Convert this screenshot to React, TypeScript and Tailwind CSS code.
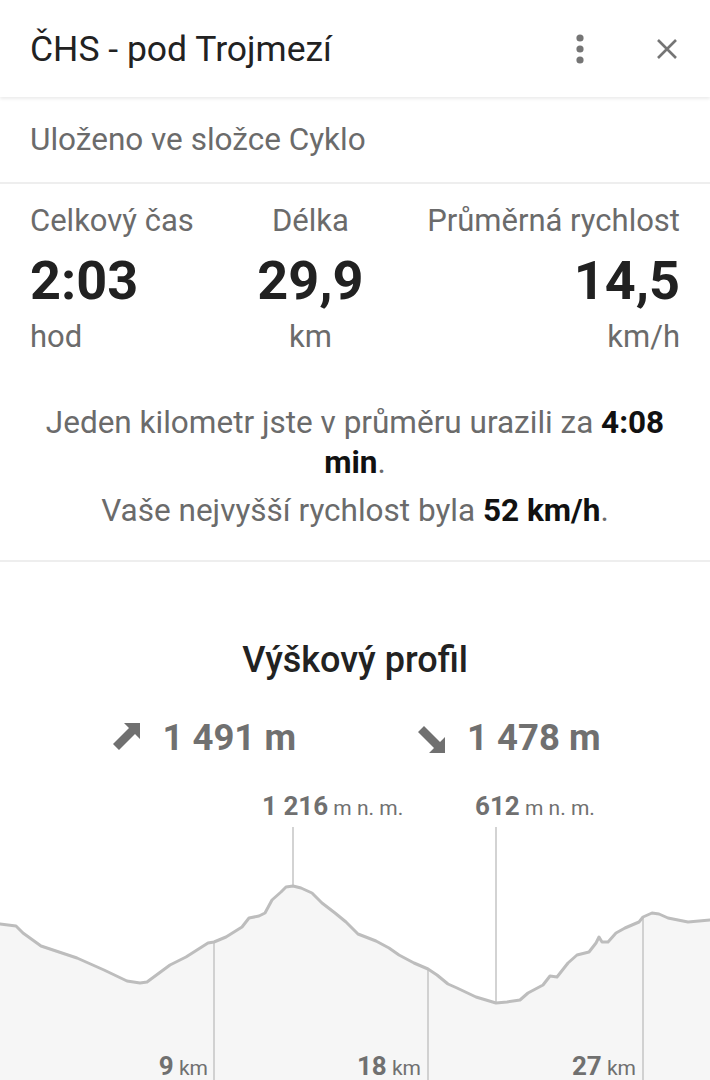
import React from "react";

const pts: [number, number][] = [
  [0, 924], [16, 926], [23, 933], [41, 946], [77, 958], [104, 970], [127, 981], [140, 983], [147, 982],
  [170, 965], [186, 957], [208, 943], [214, 942], [226, 937], [242, 927], [249, 918], [259, 916], [265, 913],
  [272, 900], [281, 892], [286, 887], [293, 886], [301, 888], [312, 893], [322, 903], [335, 913], [346, 922],
  [358, 934], [376, 941], [389, 948], [399, 955], [414, 963], [428, 969], [437, 975], [448, 984], [457, 988],
  [476, 997], [496, 1003], [507, 1002], [520, 1000], [528, 993], [543, 985], [550, 976], [557, 977], [568, 963],
  [577, 955], [589, 952], [596, 943], [599, 937], [602, 942], [608, 942], [616, 933], [625, 928], [639, 922],
  [643, 917], [652, 913], [659, 914], [668, 918], [688, 922], [710, 920],
];

const linePath = "M" + pts.map(([x, y]) => `${x},${y}`).join(" L");
const areaPath = linePath + " L712,1090 L-2,1090 Z";

function UpArrow() {
  return (
    <svg width="32" height="32" viewBox="0 0 32 32">
      <polygon points="31,1 31,17 26,12 10,28 4,22 20,6 15,1" fill="#707070" />
    </svg>
  );
}

function DownArrow() {
  return (
    <svg width="32" height="32" viewBox="0 0 32 32">
      <g transform="translate(32,0) scale(-1,1)">
        <polygon points="1,31 1,15 6,20 22,4 28,10 12,26 17,31" fill="#707070" />
      </g>
    </svg>
  );
}

export default function App() {
  return (
    <div className="w-[710px] h-[1080px] overflow-hidden bg-white font-['Roboto','Noto_Sans',sans-serif]">
      {/* Header */}
      <div className="relative z-10 h-[97px] flex items-center justify-between pl-[30px] pr-[31px] bg-white shadow-[0_2px_3px_rgba(0,0,0,0.08)]">
        <div className="text-[35.5px] leading-[40px] text-[#222222]">ČHS - pod Trojmezí</div>
        <div className="flex items-center gap-[63px]">
          <svg width="24" height="34" viewBox="0 0 24 34">
            <circle cx="12" cy="6" r="3.6" fill="#757575" />
            <circle cx="12" cy="17" r="3.6" fill="#757575" />
            <circle cx="12" cy="28" r="3.6" fill="#757575" />
          </svg>
          <svg width="24" height="24" viewBox="0 0 24 24">
            <path d="M3 3 L21 21 M21 3 L3 21" stroke="#757575" strokeWidth="2.6" strokeLinecap="butt" />
          </svg>
        </div>
      </div>

      {/* Folder */}
      <div className="h-[85px] flex items-center px-[30px] text-[31.5px] leading-[36px] text-[#6b6b6b]">
        Uloženo ve složce Cyklo
      </div>
      <div className="h-[2px] bg-[#eeeeee]" />

      {/* Stats */}
      <div className="pt-[20px] px-[30px] flex justify-between">
        <div className="flex flex-col items-start">
          <div className="text-[31px] leading-[34px] text-[#6b6b6b]">Celkový čas</div>
          <div className="mt-[15px] text-[54px] leading-[56px] font-bold text-[#212121]">2:03</div>
          <div className="mt-[11px] text-[31px] leading-[34px] text-[#6b6b6b]">hod</div>
        </div>
        <div className="flex flex-col items-center">
          <div className="text-[31px] leading-[34px] text-[#6b6b6b]">Délka</div>
          <div className="mt-[15px] text-[54px] leading-[56px] font-bold text-[#212121]">29,9</div>
          <div className="mt-[11px] text-[31px] leading-[34px] text-[#6b6b6b]">km</div>
        </div>
        <div className="flex flex-col items-end">
          <div className="text-[31px] leading-[34px] text-[#6b6b6b]">Průměrná rychlost</div>
          <div className="mt-[15px] text-[54px] leading-[56px] font-bold text-[#212121]">14,5</div>
          <div className="mt-[11px] text-[31px] leading-[34px] text-[#6b6b6b]">km/h</div>
        </div>
      </div>

      {/* Sentences */}
      <div className="mt-[49px] px-[30px] pb-[29px] text-center text-[31.5px] leading-[40px] text-[#6b6b6b]">
        <p>
          Jeden kilometr jste v průměru urazili za <span className="font-bold text-[#111111]">4:08</span>{" "}
          <span className="font-bold text-[#111111]">min</span>.
        </p>
        <p className="mt-[8px]">
          Vaše nejvyšší rychlost byla <span className="font-bold text-[#111111]">52 km/h</span>.
        </p>
      </div>
      <div className="h-[2px] bg-[#eeeeee]" />

      {/* Elevation profile */}
      <div className="mt-[78px] text-center text-[36px] leading-[40px] font-medium text-[#222222]">
        Výškový profil
      </div>
      <div className="mt-[36px] h-[44px] flex items-center justify-center gap-[118px] text-[36.5px] leading-[44px] font-bold text-[#707070]">
        <div className="flex items-center gap-[21px]">
          <UpArrow />
          <span>1 491 m</span>
        </div>
        <div className="flex items-center gap-[21px]">
          <DownArrow />
          <span>1 478 m</span>
        </div>
      </div>

      {/* Chart */}
      <div className="relative mt-[30px] h-[290px]">
        <svg className="absolute inset-0" width="710" height="290" viewBox="0 790 710 290">
          <path d={areaPath} fill="#f6f6f6" />
          <line x1="293" y1="827" x2="293" y2="886" stroke="#c8c8c8" strokeWidth="1.6" />
          <line x1="496" y1="827" x2="496" y2="1003" stroke="#c8c8c8" strokeWidth="1.6" />
          <line x1="214" y1="942" x2="214" y2="1085" stroke="#c8c8c8" strokeWidth="1.6" />
          <line x1="428" y1="969" x2="428" y2="1085" stroke="#c8c8c8" strokeWidth="1.6" />
          <line x1="643" y1="917" x2="643" y2="1085" stroke="#c8c8c8" strokeWidth="1.6" />
          <path d={linePath} fill="none" stroke="#bdbdbd" strokeWidth="3" strokeLinejoin="round" strokeLinecap="round" />
        </svg>

        <div className="absolute left-[262px] top-[1px] whitespace-nowrap leading-[30px] text-[#707070]">
          <span className="text-[26px] font-bold">1 216</span>
          <span className="text-[21px]"> m n. m.</span>
        </div>
        <div className="absolute left-[475px] top-[1px] whitespace-nowrap leading-[30px] text-[#707070]">
          <span className="text-[26px] font-bold">612</span>
          <span className="text-[21px]"> m n. m.</span>
        </div>

        <div className="absolute right-[502px] top-[261px] whitespace-nowrap leading-[30px] text-[#707070]">
          <span className="text-[26px] font-bold">9</span>
          <span className="text-[21px]"> km</span>
        </div>
        <div className="absolute right-[289px] top-[261px] whitespace-nowrap leading-[30px] text-[#707070]">
          <span className="text-[26px] font-bold">18</span>
          <span className="text-[21px]"> km</span>
        </div>
        <div className="absolute right-[74px] top-[261px] whitespace-nowrap leading-[30px] text-[#707070]">
          <span className="text-[26px] font-bold">27</span>
          <span className="text-[21px]"> km</span>
        </div>
      </div>
    </div>
  );
}
